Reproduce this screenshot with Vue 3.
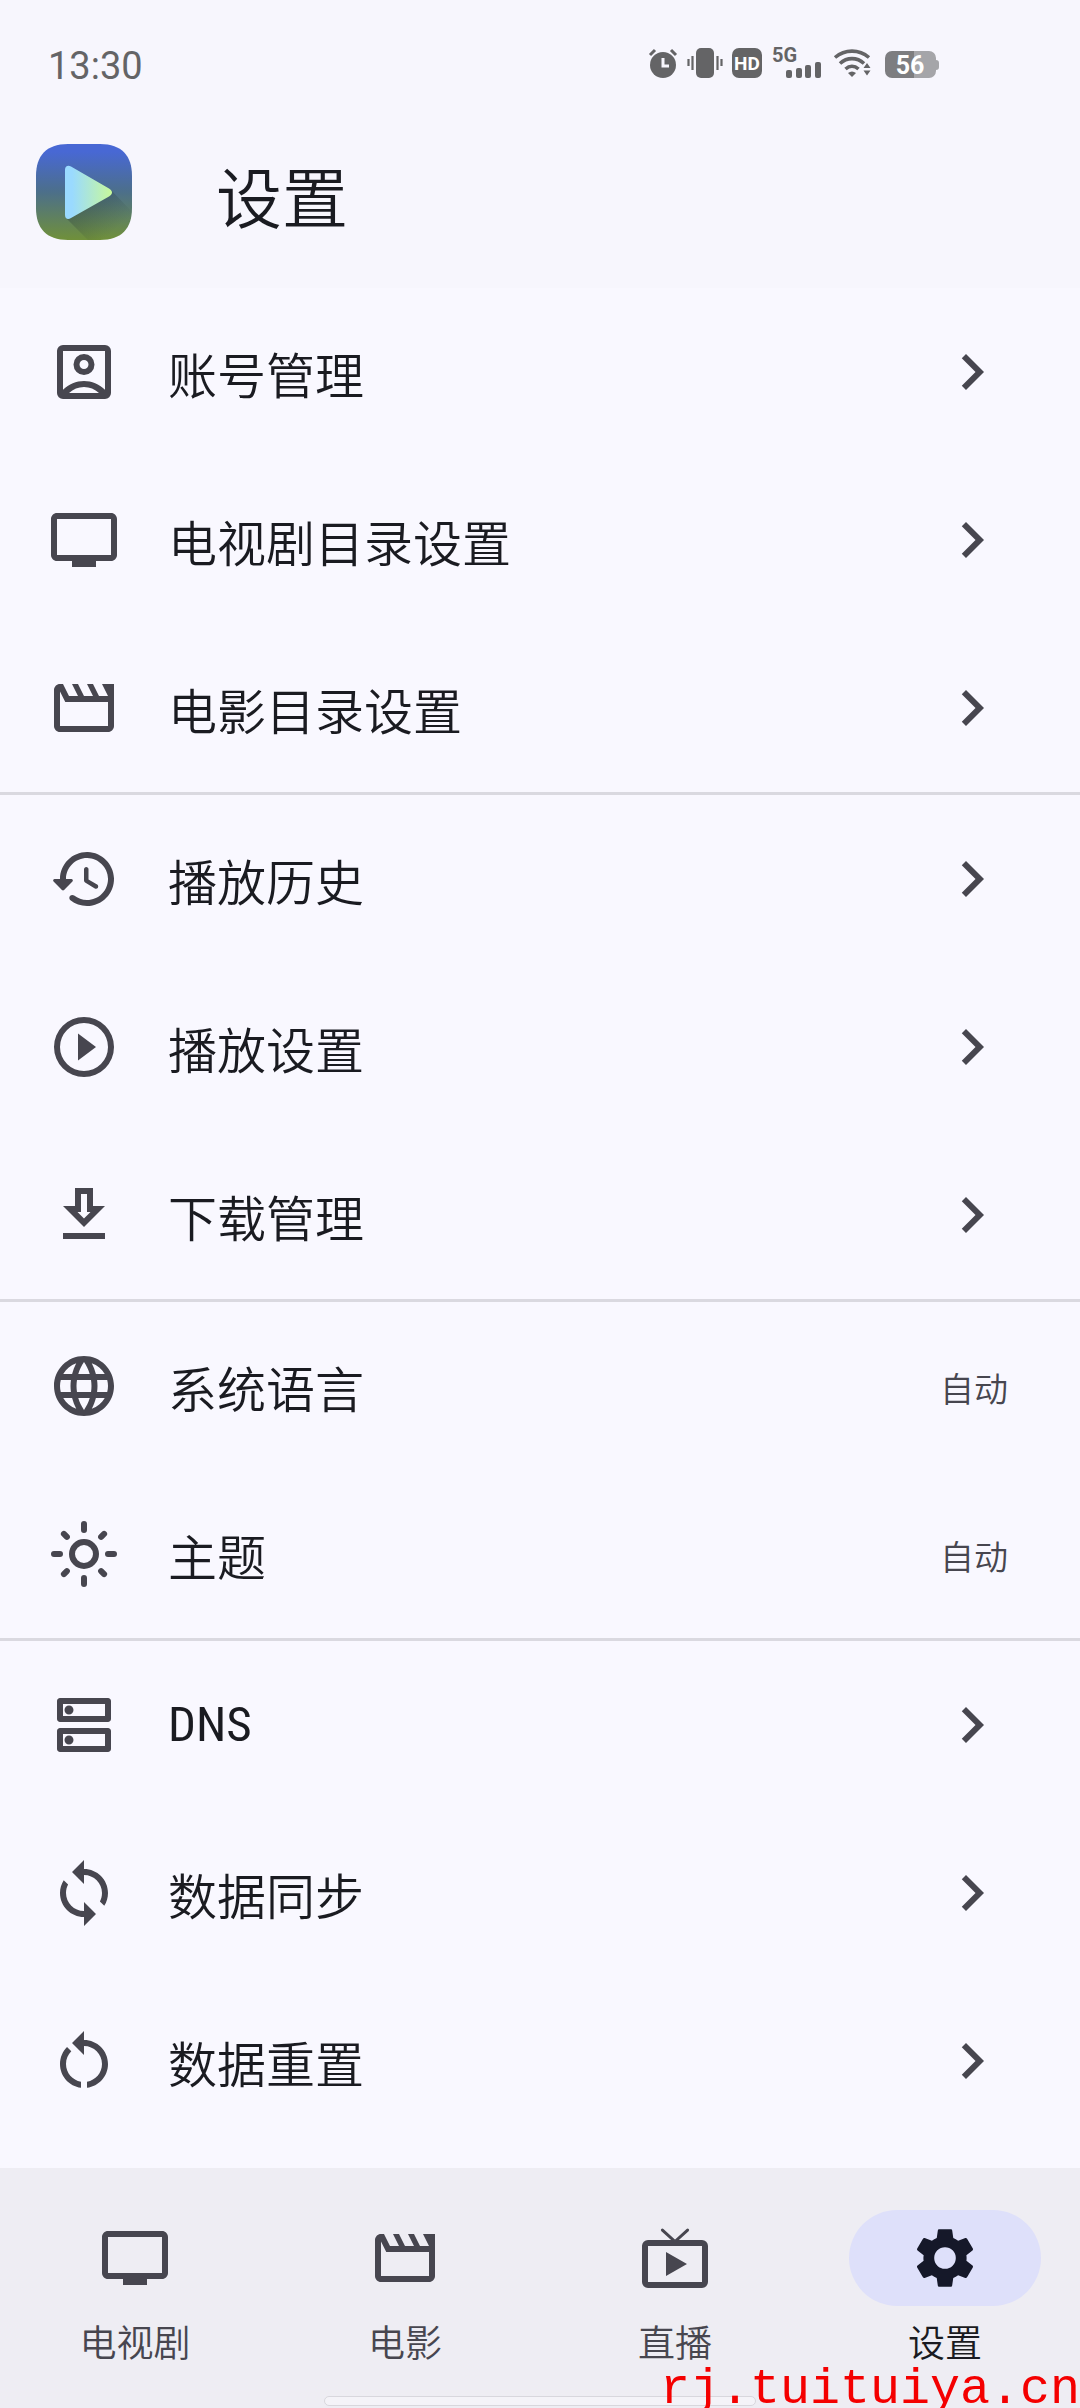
<template>
  <div class="page">
    <!-- Status bar -->
    <div class="status-bar">
      <span class="clock">13:30</span>
      <div class="status-icons">
        <svg width="30" height="30" viewBox="0 0 30 30">
          <circle cx="15" cy="17" r="13" />
          <path d="M2 7l5-5M28 7l-5-5" class="line" stroke-width="3" />
          <path d="M15 10v8h6" class="line light" stroke-width="3" />
        </svg>
        <svg width="36" height="30" viewBox="0 0 36 30">
          <rect x="9" y="0" width="18" height="30" rx="5" />
          <path d="M1.5 11v7M5.5 8v14M30.5 8v14M34.5 11v7" class="line" stroke-width="2.2" />
        </svg>
        <svg width="30" height="30" viewBox="0 0 30 30">
          <rect width="30" height="30" rx="7" />
          <text x="15" y="22" class="hd">HD</text>
        </svg>
        <svg width="52" height="30" viewBox="0 0 52 30">
          <text x="1" y="14" class="network">5G</text>
          <rect x="15" y="22" width="6" height="8" rx="2" />
          <rect x="25" y="20" width="6" height="10" rx="2" />
          <rect x="34" y="17" width="6" height="13" rx="2" />
          <rect x="44" y="14" width="6" height="16" rx="2" />
        </svg>
        <svg width="44" height="30" viewBox="0 0 44 30">
          <path d="M3 9.5C13 1 27 1 37 9.5M8 15.5c7-6.5 17-6.5 24 0M13.5 21c4-3.5 9-3.5 13 0" class="line" stroke-width="3.6" />
          <path d="M16 25q4-3 8 0l-4 4z" />
          <path d="M31.5 20l3.5-5 3.5 5zM31.5 22.5l3.5 5 3.5-5z" />
        </svg>
        <svg width="54" height="30" viewBox="0 0 54 30">
          <path d="M7 3h22v27H7a7 7 0 0 1-7-7V10a7 7 0 0 1 7-7z" fill="#7d7d80" />
          <path d="M29 3h15a7 7 0 0 1 7 7v2c2 0 3 1 3 3v4c0 2-1 3-3 3v1a7 7 0 0 1-7 7H29z" fill="#a5a5a9" />
          <text x="25" y="26" class="battery">56</text>
        </svg>
      </div>
    </div>

    <!-- Header -->
    <header class="header">
      <svg class="logo" viewBox="0 0 96 96">
        <defs>
          <linearGradient id="logoBg" x1="0" y1="0" x2="0" y2="1">
            <stop offset="0.08" stop-color="#4868d4" />
            <stop offset="0.5" stop-color="#4c6f8a" />
            <stop offset="1" stop-color="#70903a" />
          </linearGradient>
          <linearGradient id="logoPlay" x1="0" y1="0" x2="1" y2="0">
            <stop offset="0.15" stop-color="#9adaff" />
            <stop offset="1" stop-color="#c8f99b" />
          </linearGradient>
          <linearGradient id="logoShadow" x1="40" y1="55" x2="72" y2="92" gradientUnits="userSpaceOnUse">
            <stop offset="0" stop-color="#1f2f30" stop-opacity="0.35" />
            <stop offset="1" stop-color="#1f2f30" stop-opacity="0" />
          </linearGradient>
          <clipPath id="logoClip">
            <path d="M32 0h32c22 0 32 12 32 32v32c0 20-10 32-32 32H32C10 96 0 84 0 64V32C0 12 10 0 32 0z" />
          </clipPath>
        </defs>
        <g clip-path="url(#logoClip)">
          <rect width="96" height="96" fill="url(#logoBg)" />
          <path d="M30 74l22 22h44V68L75 46z" fill="url(#logoShadow)" />
          <path d="M29 26c0-4 3-5 6-3.5l38 22c4 2.5 4 5.5 0 8L35 74c-3 2-6 1-6-3z" fill="url(#logoPlay)" />
        </g>
      </svg>
      <h1>设置</h1>
    </header>

    <!-- Settings list -->
    <main class="settings">
      <section v-for="(group, i) in groups" :key="i" class="group">
        <button v-for="item in group" :key="item.label" type="button" class="row">
          <svg class="icon" viewBox="0 0 24 24">
            <path :d="icons[item.icon]" fill-rule="evenodd" />
            <path v-if="item.icon === 'theme'" :d="sunLines" class="sun" />
          </svg>
          <span class="label" :class="{ latin: item.latin }">{{ item.label }}</span>
          <span v-if="item.value" class="value">{{ item.value }}</span>
          <svg v-else class="icon" viewBox="0 0 24 24">
            <path d="M8.59 16.59L13.17 12 8.59 7.41 10 6l6 6-6 6z" />
          </svg>
        </button>
      </section>
    </main>

    <!-- Bottom navigation -->
    <nav class="bottom-nav">
      <a
        v-for="tab in tabs"
        :key="tab.label"
        href="#"
        class="tab"
        :class="{ active: tab.label === activeTab }"
        @click.prevent="activeTab = tab.label"
      >
        <span class="pill">
          <svg class="icon" viewBox="0 0 24 24">
            <path :d="icons[tab.icon]" fill-rule="evenodd" />
            <path v-if="tab.icon === 'live'" d="M7.8 2.7L12 6.5l4.2-3.8" class="antenna" />
          </svg>
        </span>
        <span class="tab-label">{{ tab.label }}</span>
      </a>
    </nav>

    <div class="home-indicator"></div>
    <div class="watermark">rj.tuituiya.cn</div>
  </div>
</template>

<script setup>
import { ref } from 'vue';

const activeTab = ref('设置');

const groups = [
  [
    { label: '账号管理', icon: 'account' },
    { label: '电视剧目录设置', icon: 'tv' },
    { label: '电影目录设置', icon: 'movie' },
  ],
  [
    { label: '播放历史', icon: 'history' },
    { label: '播放设置', icon: 'play' },
    { label: '下载管理', icon: 'download' },
  ],
  [
    { label: '系统语言', icon: 'language', value: '自动' },
    { label: '主题', icon: 'theme', value: '自动' },
  ],
  [
    { label: 'DNS', icon: 'dns', latin: true },
    { label: '数据同步', icon: 'sync' },
    { label: '数据重置', icon: 'reset' },
  ],
];

const tabs = [
  { label: '电视剧', icon: 'tv' },
  { label: '电影', icon: 'movie' },
  { label: '直播', icon: 'live' },
  { label: '设置', icon: 'settings' },
];

const sunLines = 'M12 2v2M12 20v2M2 12h2M20 12h2M5.3 5.3l1 1M17.7 17.7l1 1M5.3 18.7l1-1M17.7 6.3l1-1';

const icons = {
  account: 'M5 3h14a2 2 0 0 1 2 2v14a2 2 0 0 1-2 2H5a2 2 0 0 1-2-2V5a2 2 0 0 1 2-2zM5 5v12.9C7 16 9.4 15 12 15s5 1 7 2.9V5zM7 19h10c-1.4-1.3-3.1-2-5-2s-3.6.7-5 2zM12 6a3.5 3.5 0 1 1 0 7 3.5 3.5 0 0 1 0-7zM12 8a1.5 1.5 0 1 0 0 3 1.5 1.5 0 0 0 0-3z',
  tv: 'M21 3H3c-1.11 0-2 .89-2 2v12c0 1.1.89 2 2 2h5v2h8v-2h5c1.1 0 2-.9 2-2V5c0-1.11-.9-2-2-2zm0 14H3V5h18v12z',
  movie: 'M4 6.47L5.76 10H20v8H4V6.47M22 4h-4l2 4h-3l-2-4h-2l2 4h-3l-2-4H8l2 4H7L5 4H4c-1.1 0-2 .9-2 2v12c0 1.1.9 2 2 2h16c1.1 0 2-.9 2-2V4z',
  history: 'M13.26 3C8.17 2.86 4 6.95 4 12H2.21c-.45 0-.67.54-.35.85l2.79 2.8c.2.2.51.2.71 0l2.79-2.8c.31-.31.09-.85-.36-.85H6c0-3.9 3.18-7.05 7.1-7 3.72.05 6.85 3.18 6.9 6.9.05 3.91-3.1 7.1-7 7.1-1.61 0-3.1-.55-4.28-1.48-.4-.31-.96-.28-1.32.08-.42.42-.39 1.13.08 1.49C9 20.29 10.91 21 13 21c5.05 0 9.14-4.17 9-9.26-.13-4.69-4.05-8.61-8.74-8.74zm-.51 5c-.41 0-.75.34-.75.75v3.68c0 .35.19.68.49.86l3.12 1.85c.36.21.82.09 1.03-.26.21-.36.09-.82-.26-1.03l-2.88-1.71v-3.4c0-.4-.34-.74-.75-.74z',
  play: 'M10 16.5l6-4.5-6-4.5v9zM12 2a10 10 0 1 0 0 20 10 10 0 0 0 0-20zM12 20a8 8 0 1 1 0-16 8 8 0 0 1 0 16z',
  download: 'M19 9h-4V3H9v6H5l7 7 7-7zm-8 2V5h2v6h1.17L12 13.17 9.83 11H11zm-6 7h14v2H5z',
  language: 'M11.99 2C6.47 2 2 6.48 2 12s4.47 10 9.99 10C17.52 22 22 17.52 22 12S17.52 2 11.99 2zm6.93 6h-2.95c-.32-1.25-.78-2.45-1.38-3.56 1.84.63 3.37 1.91 4.33 3.56zM12 4.04c.83 1.2 1.48 2.53 1.91 3.96h-3.82c.43-1.43 1.08-2.76 1.91-3.96zM4.26 14C4.1 13.36 4 12.69 4 12s.1-1.36.26-2h3.38c-.08.66-.14 1.32-.14 2s.06 1.34.14 2H4.26zm.82 2h2.95c.32 1.25.78 2.45 1.38 3.56-1.84-.63-3.37-1.9-4.33-3.56zm2.95-8H5.08c.96-1.66 2.49-2.93 4.33-3.56C8.81 5.55 8.35 6.75 8.03 8zM12 19.96c-.83-1.2-1.48-2.53-1.91-3.96h3.82c-.43 1.43-1.08 2.76-1.91 3.96zM14.34 14H9.66c-.09-.66-.16-1.32-.16-2s.07-1.35.16-2h4.68c.09.65.16 1.32.16 2s-.07 1.34-.16 2zm.25 5.56c.6-1.11 1.06-2.31 1.38-3.56h2.95c-.96 1.65-2.49 2.93-4.33 3.56zM16.36 14c.08-.66.14-1.32.14-2s-.06-1.34-.14-2h3.38c.16.64.26 1.31.26 2s-.1 1.36-.26 2h-3.38z',
  theme: 'M12 7a5 5 0 1 0 0 10 5 5 0 0 0 0-10zM12 9a3 3 0 1 1 0 6 3 3 0 0 1 0-6z',
  dns: 'M19 15v4H5v-4h14m1-2H4c-.55 0-1 .45-1 1v6c0 .55.45 1 1 1h16c.55 0 1-.45 1-1v-6c0-.55-.45-1-1-1zM7 18.5c-.82 0-1.5-.67-1.5-1.5s.68-1.5 1.5-1.5 1.5.67 1.5 1.5-.67 1.5-1.5 1.5zM19 5v4H5V5h14m1-2H4c-.55 0-1 .45-1 1v6c0 .55.45 1 1 1h16c.55 0 1-.45 1-1V4c0-.55-.45-1-1-1zM7 8.5c-.82 0-1.5-.67-1.5-1.5S6.18 5.5 7 5.5s1.5.68 1.5 1.5S7.83 8.5 7 8.5z',
  sync: 'M12 4V1L8 5l4 4V6c3.31 0 6 2.69 6 6 0 1.01-.25 1.97-.7 2.8l1.46 1.46C19.54 15.03 20 13.57 20 12c0-4.42-3.58-8-8-8zm0 14c-3.31 0-6-2.69-6-6 0-1.01.25-1.97.7-2.8L5.24 7.74C4.46 8.97 4 10.43 4 12c0 4.42 3.58 8 8 8v3l4-4-4-4v3z',
  reset: 'M12 5V2L8 6l4 4V7c3.31 0 6 2.69 6 6 0 2.97-2.17 5.43-5 5.91v2.02c3.95-.49 7-3.85 7-7.93 0-4.42-3.58-8-8-8zM6 13c0-1.65.67-3.15 1.76-4.24L6.34 7.34C4.9 8.79 4 10.79 4 13c0 4.08 3.05 7.44 7 7.93v-2.02c-2.83-.48-5-2.94-5-5.91z',
  live: 'M9 10v8l7-4zM3 6h18a2 2 0 0 1 2 2v12a2 2 0 0 1-2 2H3a2 2 0 0 1-2-2V8a2 2 0 0 1 2-2zM3 8v12h18V8z',
  settings: 'M19.14 12.94c.04-.3.06-.61.06-.94 0-.32-.02-.64-.07-.94l2.03-1.58c.18-.14.23-.41.12-.61l-1.92-3.32c-.12-.22-.37-.29-.59-.22l-2.39.96c-.5-.38-1.03-.7-1.62-.94L14.4 2.81c-.04-.24-.24-.41-.48-.41h-3.84c-.24 0-.43.17-.47.41L9.25 5.35C8.66 5.59 8.12 5.92 7.63 6.29L5.24 5.33c-.22-.08-.47 0-.59.22L2.74 8.87c-.12.21-.08.47.12.61l2.03 1.58C4.84 11.36 4.8 11.69 4.8 12s.02.64.07.94l-2.03 1.58c-.18.14-.23.41-.12.61l1.92 3.32c.12.22.37.29.59.22l2.39-.96c.5.38 1.03.7 1.62.94l.36 2.54c.05.24.24.41.48.41h3.84c.24 0 .44-.17.47-.41l.36-2.54c.59-.24 1.13-.56 1.62-.94l2.39.96c.22.08.47 0 .59-.22l1.92-3.32c.12-.22.07-.47-.12-.61zM12 15.6a3.6 3.6 0 1 1 0-7.2 3.6 3.6 0 0 1 0 7.2z',
};
</script>

<style>
body {
  background: #f9f8ff;
}
</style>

<style scoped>
.page {
  position: relative;
  display: flex;
  flex-direction: column;
  min-height: 100vh;
  overflow: hidden;
  background: #f9f8ff;
  color: #1a1b21;
  font-family: "Noto Sans CJK SC", sans-serif;
  font-weight: 350;
}

.status-bar {
  display: flex;
  align-items: center;
  justify-content: space-between;
  height: 66px;
  padding: 30px 141px 0 48px;
  background: #f7f6fd;
}

.clock {
  padding-top: 6px;
  color: #646466;
  font-family: Roboto, sans-serif;
  font-size: 38px;
  font-weight: 400;
  line-height: 60px;
}

.status-icons {
  display: flex;
  align-items: center;
  gap: 9px;
  fill: #646466;
}

.status-icons svg {
  overflow: visible;
}

.line {
  fill: none;
  stroke: #646466;
}

.light {
  stroke: #f7f6fd;
}

.hd,
.battery {
  fill: #fff;
  font-family: Roboto, sans-serif;
  font-size: 19px;
  font-weight: 700;
  text-anchor: middle;
}

.battery {
  font-size: 25px;
}

.network {
  font-family: Roboto, sans-serif;
  font-size: 20px;
  font-weight: 700;
}

.header {
  display: flex;
  align-items: center;
  gap: 84px;
  height: 192px;
  padding: 0 36px;
  background: #f7f6fd;
}

.logo {
  width: 96px;
  height: 96px;
}

h1 {
  margin: 0;
  padding-top: 4px;
  font-size: 66px;
  font-weight: 350;
  line-height: 84px;
}

.settings {
  flex: 1;
}

.group + .group {
  border-top: 3px solid #dad9e0;
}

.row {
  display: flex;
  align-items: center;
  gap: 48px;
  box-sizing: border-box;
  width: 100%;
  height: 168px;
  padding: 0 72px 0 48px;
  border: 0;
  background: none;
  color: inherit;
  font: inherit;
  text-align: left;
  cursor: pointer;
}

.icon {
  flex: none;
  width: 72px;
  height: 72px;
  fill: #47464f;
}

.sun {
  stroke: #47464f;
  stroke-width: 2;
  stroke-linecap: round;
}

.antenna {
  fill: none;
  stroke: #47464f;
  stroke-linecap: round;
}

.label {
  flex: 1;
  padding-top: 2px;
  font-size: 49px;
  line-height: 72px;
}

.latin {
  padding-top: 0;
  font-family: "Roboto Condensed", Roboto, sans-serif;
  font-weight: 400;
}

.value {
  padding-top: 4px;
  color: #47464f;
  font-size: 34px;
  line-height: 48px;
}

.bottom-nav {
  display: grid;
  grid-template-columns: repeat(4, 1fr);
  box-sizing: border-box;
  height: 240px;
  padding-top: 42px;
  background: #eeedf3;
}

.tab {
  display: flex;
  flex-direction: column;
  align-items: center;
  gap: 11px;
  color: #47464f;
  text-decoration: none;
}

.pill {
  display: flex;
  align-items: center;
  justify-content: center;
  width: 192px;
  height: 96px;
  border-radius: 48px;
}

.tab-label {
  font-size: 37px;
  line-height: 48px;
}

.active {
  color: #1a1b21;
}

.active .pill {
  background: #dee0fa;
}

.active .icon {
  fill: #151829;
}

.home-indicator {
  position: absolute;
  bottom: 2px;
  left: 30%;
  right: 30%;
  height: 8px;
  border: 1px solid #d8d7dd;
  border-radius: 5px;
  background: #f4f3f8;
}

.watermark {
  position: absolute;
  right: 0;
  bottom: -7px;
  color: #f40000;
  font-family: "Liberation Mono", monospace;
  font-size: 50px;
  font-weight: 400;
  line-height: 50px;
}
</style>
